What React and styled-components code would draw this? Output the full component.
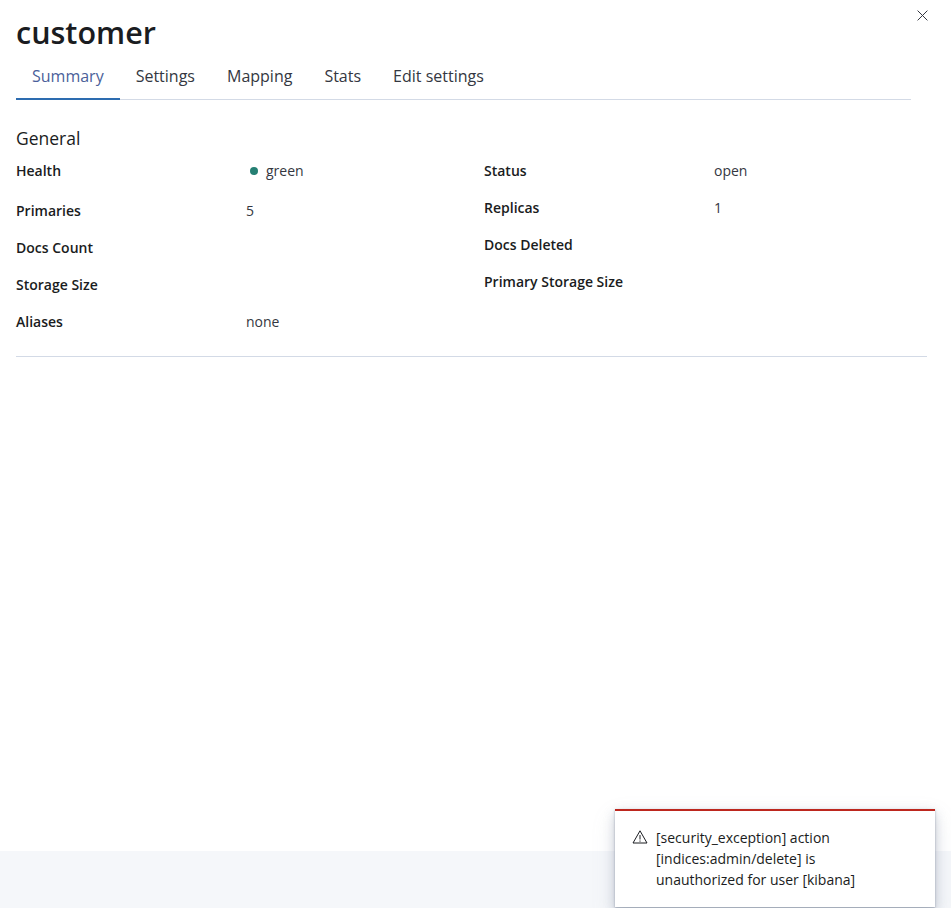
import React from "react";
import styled, { createGlobalStyle } from "styled-components";

const Global = createGlobalStyle`
  html, body { margin: 0; padding: 0; background: #fff; }
  body { font-family: "Open Sans", "Noto Sans", sans-serif; color: #1a1c21; overflow: hidden; }
`;

const Page = styled.div`
  position: relative;
  height: 908px;
  display: flex;
  flex-direction: column;
`;

const Main = styled.main`
  flex: 1;
  padding: 12px 24px 0 16px;
`;

const Title = styled.h1`
  margin: 0;
  font-size: 30.5px;
  line-height: 40px;
  font-weight: 600;
  color: #1a1c21;
`;

const Tabs = styled.nav`
  display: flex;
  width: 895px;
  height: 47px;
  border-bottom: 1px solid #d3dae6;
`;

const Tab = styled.div`
  padding: 0 16px;
  font-size: 16px;
  line-height: 48px;
  height: 48px;
  box-sizing: border-box;
  color: ${(p) => (p.$active ? "#4b5f9a" : "#343741")};
  border-bottom: ${(p) => (p.$active ? "2px solid #2d6cb0" : "none")};
`;

const Heading = styled.h2`
  margin: 25px 0 0;
  font-size: 17.5px;
  line-height: 26px;
  font-weight: 500;
`;

const Columns = styled.div`
  display: grid;
  grid-template-columns: 468px 1fr;
  margin-top: 10px;
`;

const List = styled.dl`
  margin: 0;
  display: flex;
  flex-direction: column;
`;

const Row = styled.div`
  display: flex;
  height: ${(p) => p.$h || 37}px;
  font-size: 14px;
  line-height: 20px;
`;

const Label = styled.dt`
  width: 230px;
  font-weight: 600;
  color: #1a1c21;
`;

const Value = styled.dd`
  margin: 0;
  display: flex;
  align-items: center;
  height: 20px;
  color: #343741;
`;

const Dot = styled.span`
  width: 8px;
  height: 8px;
  margin: 0 8px 0 4px;
  border-radius: 50%;
  background: #257f73;
`;

const Rule = styled.hr`
  margin: 14px 0 0;
  border: 0;
  height: 1px;
  background: #d3dae6;
`;

const Footer = styled.footer`
  height: 57px;
  background: #f5f7fa;
`;

const Close = styled.button`
  position: absolute;
  top: 9px;
  right: 22px;
  padding: 0;
  border: 0;
  background: none;
  width: 13px;
  height: 13px;
  color: #343741;
  svg { display: block; }
`;

const Toast = styled.div`
  position: absolute;
  left: 615px;
  top: 809px;
  width: 320px;
  height: 98px;
  box-sizing: border-box;
  padding: 16px 16px 0 17px;
  display: flex;
  gap: 8px;
  background: #fff;
  border-top: 2px solid #bd271e;
  box-shadow: 0 1px 2px rgba(120,130,150,.65), 0 4px 10px rgba(152,162,179,.45), 0 10px 20px rgba(152,162,179,.25);
`;

const ToastText = styled.div`
  font-size: 14px;
  line-height: 21px;
  color: #1a1c21;
`;

const ToastIcon = styled.svg`
  flex: none;
  width: 16px;
  height: 16px;
  margin-top: 2px;
`;

const left = [
  ["Health", <><Dot />green</>, 40],
  ["Primaries", "5"],
  ["Docs Count", ""],
  ["Storage Size", ""],
  ["Aliases", "none", 30],
];
const right = [
  ["Status", "open"],
  ["Replicas", "1"],
  ["Docs Deleted", ""],
  ["Primary Storage Size", ""],
];

const Fields = ({ items }) => (
  <List>
    {items.map(([k, v, h]) => (
      <Row key={k} $h={h}>
        <Label>{k}</Label>
        <Value>{v}</Value>
      </Row>
    ))}
  </List>
);

export default function App() {
  return (
    <Page>
      <Global />
      <Main>
        <Title>customer</Title>
        <Tabs>
          <Tab $active>Summary</Tab>
          <Tab>Settings</Tab>
          <Tab>Mapping</Tab>
          <Tab>Stats</Tab>
          <Tab>Edit settings</Tab>
        </Tabs>
        <Heading>General</Heading>
        <Columns>
          <Fields items={left} />
          <Fields items={right} />
        </Columns>
        <Rule />
      </Main>
      <Footer />
      <Close aria-label="Close">
        <svg viewBox="0 0 13 13" width="13" height="13" fill="none" stroke="currentColor" strokeWidth="1">
          <path d="M1.6 1.6l9.8 9.8M11.4 1.6l-9.8 9.8" />
        </svg>
      </Close>
      <Toast>
        <ToastIcon viewBox="0 0 16 16" fill="none" stroke="#1a1c21" strokeWidth="1">
          <path d="M8 1.8 15 14H1z" strokeLinejoin="round" />
          <path d="M8 6v4.5M8 11.5v1.2" />
        </ToastIcon>
        <ToastText>
          [security_exception] action
          <br />
          [indices:admin/delete] is
          <br />
          unauthorized for user [kibana]
        </ToastText>
      </Toast>
    </Page>
  );
}
